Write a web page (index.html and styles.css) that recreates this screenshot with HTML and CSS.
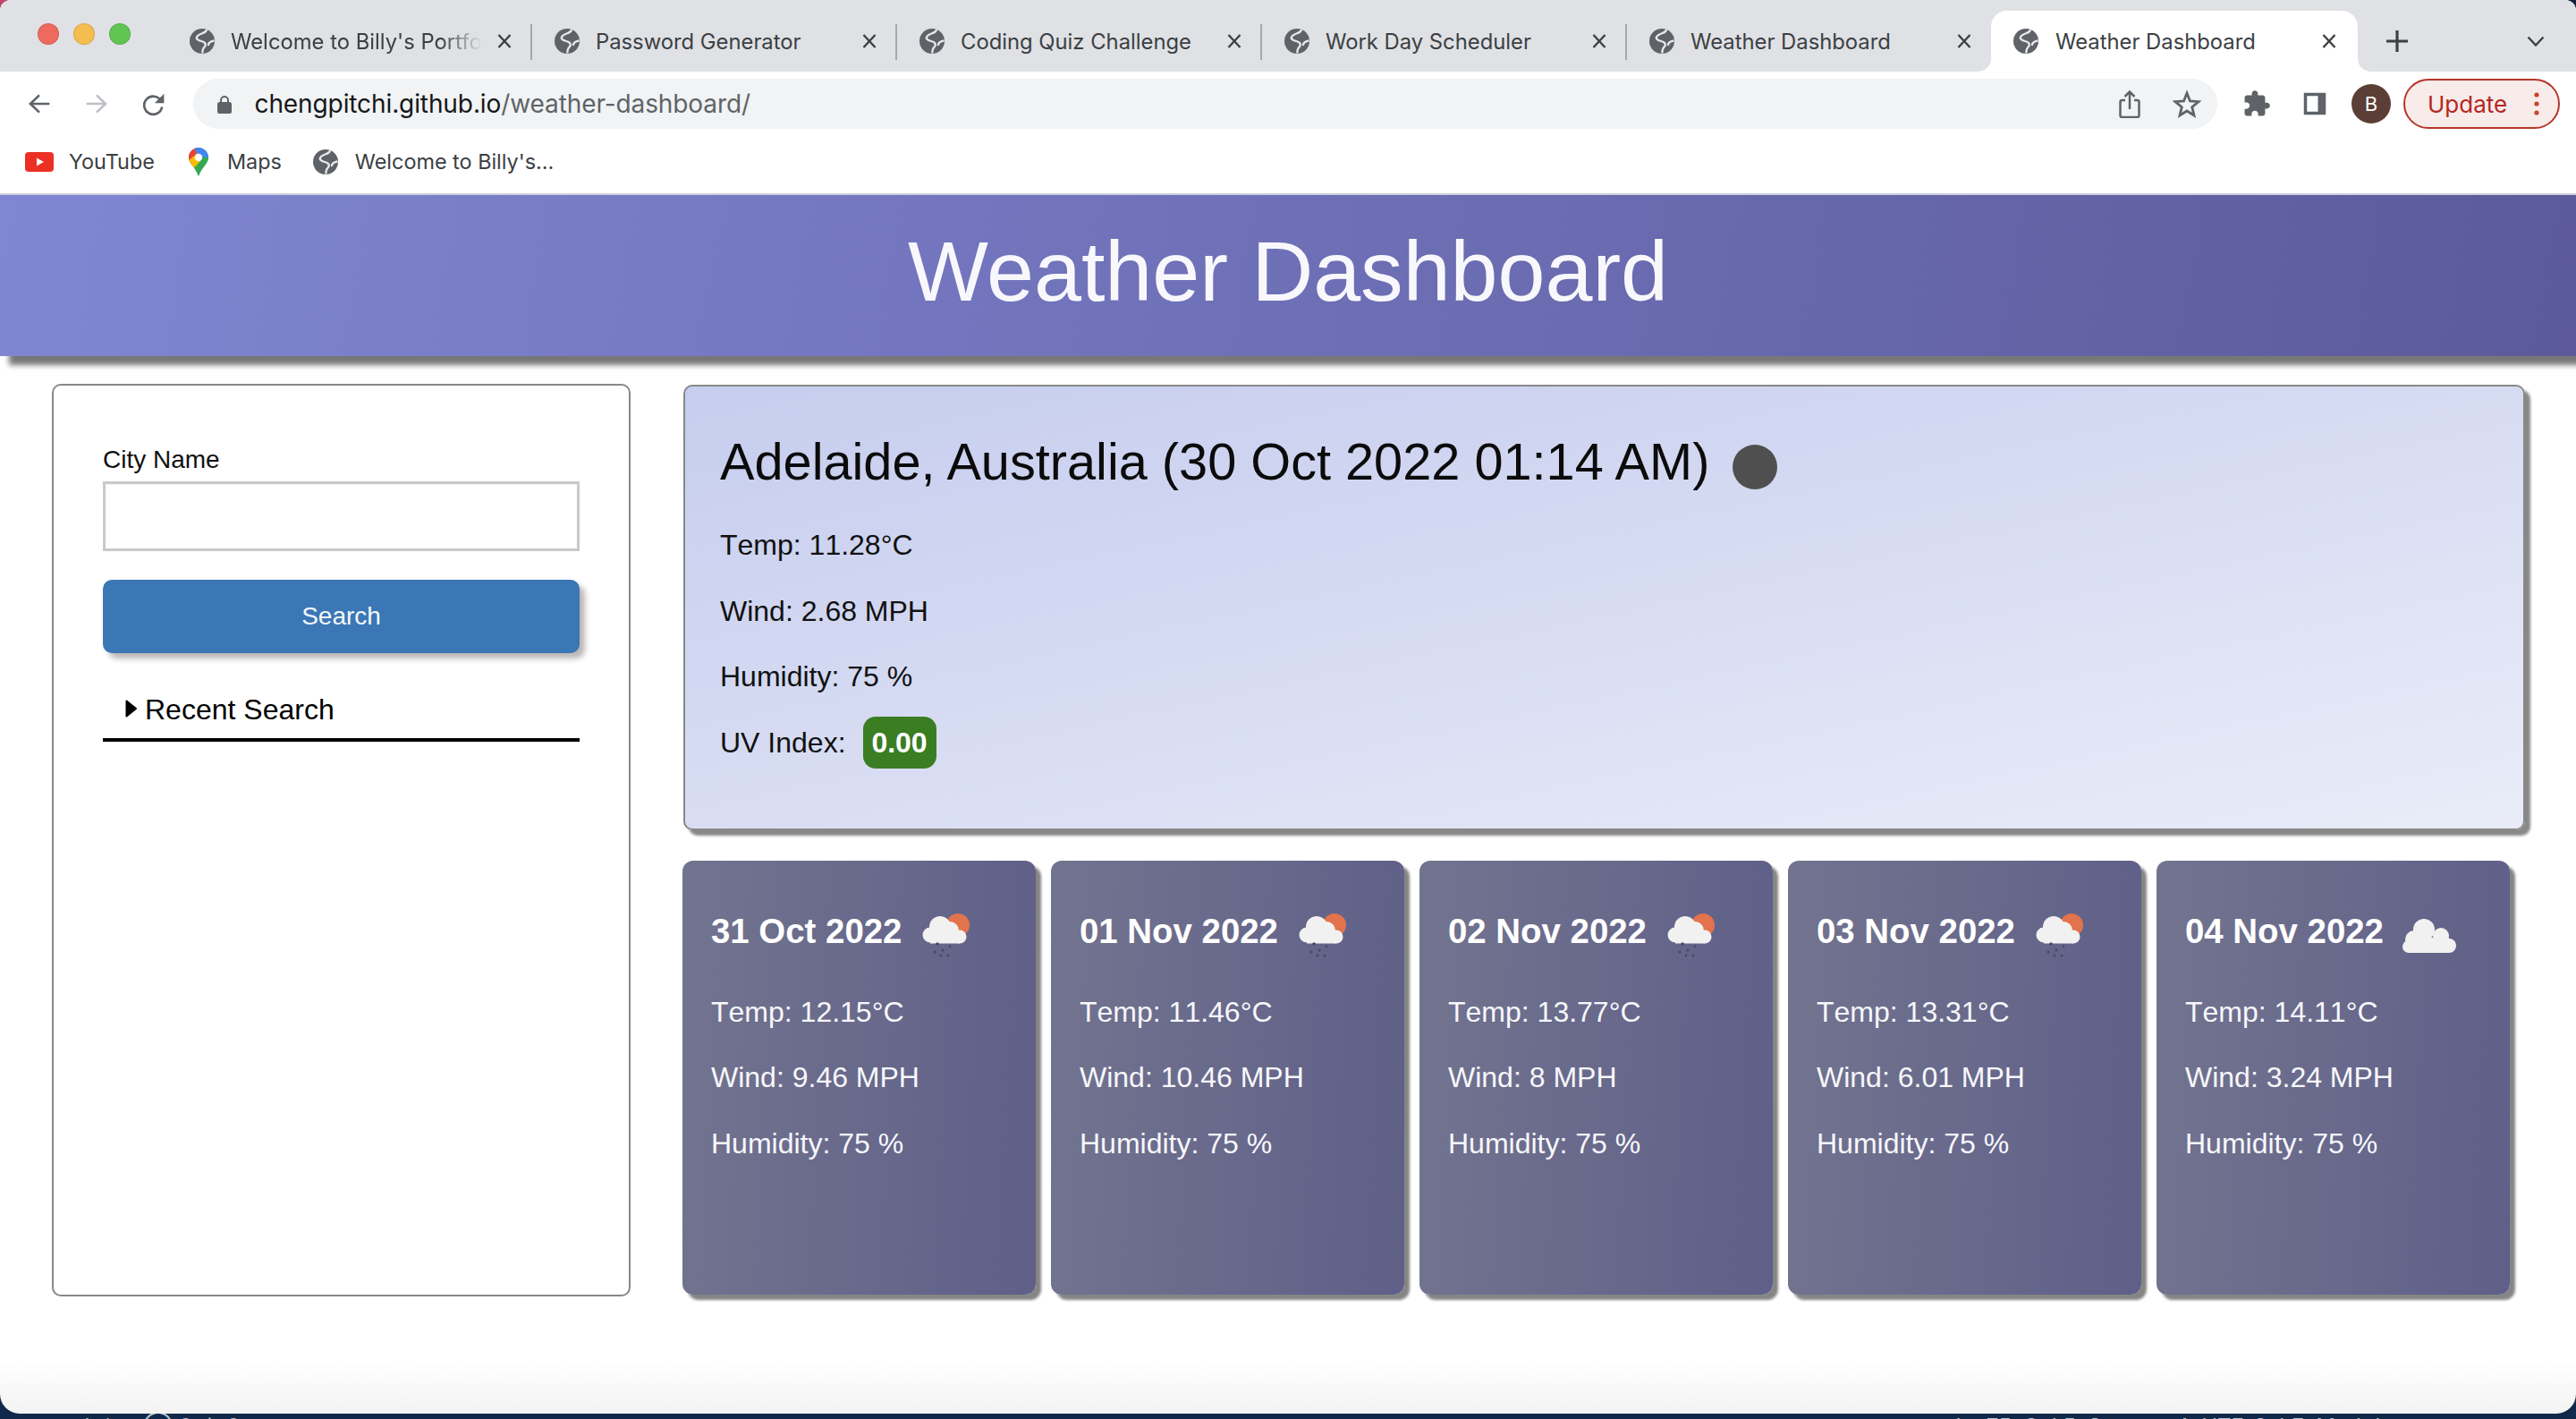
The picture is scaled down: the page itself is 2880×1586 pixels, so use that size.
FILE: index.html
```html
<!DOCTYPE html>
<html lang="en">
<head>
<meta charset="utf-8">
<title>Weather Dashboard</title>
<link rel="stylesheet" href="styles.css">
</head>
<body>
<svg class="defs" width="0" height="0" aria-hidden="true">
  <symbol id="globe" viewBox="0 0 28 28">
    <circle cx="14" cy="14" r="14" fill="#5f6368"/>
    <path d="M19 1 C18.500 5.500 12.500 4.500 9 8 C6 11 9 13 13 14 C17 15 19 17 17 20 C15 22 14 24 14.500 27.500 M21 19 C20.500 15.500 24 14 27.500 13.500" fill="none" stroke="#e8e9ec" stroke-width="2.300"/>
  </symbol>
  <symbol id="close" viewBox="0 0 16 16">
    <path d="M1.500 1 L14.500 15 M14.500 1 L1.500 15" fill="none" stroke="#3c4043" stroke-width="2.400"/>
  </symbol>
  <symbol id="rain" viewBox="0 0 80 70">
    <circle cx="52" cy="28" r="13" fill="#e2734c"/>
    <g fill="#f1f1f1">
      <circle cx="32" cy="30" r="12"/>
      <circle cx="21" cy="39" r="8.500"/>
      <circle cx="43" cy="34" r="10"/>
      <circle cx="54" cy="41" r="7.500"/>
      <rect x="21" y="36" width="33" height="12.500"/>
    </g>
    <g fill="#4a4a5c">
      <circle cx="29" cy="49" r="1.800"/><circle cx="26" cy="58" r="1.600"/><circle cx="35" cy="56" r="1.600"/>
      <circle cx="43" cy="52" r="1.400"/><circle cx="41" cy="62" r="1.600"/><circle cx="33" cy="62" r="1.400"/>
    </g>
  </symbol>
  <symbol id="cloud" viewBox="0 0 80 70">
    <g fill="#f1f1f1">
      <circle cx="34" cy="33" r="12"/>
      <circle cx="23" cy="44" r="10"/>
      <circle cx="53" cy="40" r="9"/>
      <circle cx="62" cy="51" r="8"/>
      <circle cx="17" cy="52" r="7"/>
      <rect x="17" y="42" width="45" height="17"/>
    </g>
  </symbol>
</svg>

<div class="desktop">
  <div class="window">
    <div class="tabstrip">
      <div class="lights">
        <span class="light light-red"></span>
        <span class="light light-yellow"></span>
        <span class="light light-green"></span>
      </div>
      <div class="tab">
        <svg class="tab-icon"><use href="#globe"/></svg>
        <span class="tab-title tab-title-fade">Welcome to Billy's Portfolio</span>
        <svg class="tab-close"><use href="#close"/></svg>
      </div>
      <div class="tab">
        <svg class="tab-icon"><use href="#globe"/></svg>
        <span class="tab-title">Password Generator</span>
        <svg class="tab-close"><use href="#close"/></svg>
      </div>
      <div class="tab">
        <svg class="tab-icon"><use href="#globe"/></svg>
        <span class="tab-title">Coding Quiz Challenge</span>
        <svg class="tab-close"><use href="#close"/></svg>
      </div>
      <div class="tab">
        <svg class="tab-icon"><use href="#globe"/></svg>
        <span class="tab-title">Work Day Scheduler</span>
        <svg class="tab-close"><use href="#close"/></svg>
      </div>
      <div class="tab tab-nosep">
        <svg class="tab-icon"><use href="#globe"/></svg>
        <span class="tab-title">Weather Dashboard</span>
        <svg class="tab-close"><use href="#close"/></svg>
      </div>
      <div class="tab tab-active">
        <svg class="tab-icon"><use href="#globe"/></svg>
        <span class="tab-title">Weather Dashboard</span>
        <svg class="tab-close"><use href="#close"/></svg>
      </div>
      <svg class="newtab" viewBox="0 0 24 24"><path d="M12 0 V24 M0 12 H24" fill="none" stroke="#3c4043" stroke-width="3.200"/></svg>
      <svg class="tabmenu" viewBox="0 0 20 12"><path d="M1.500 1.500 L10 10.500 L18.500 1.500" fill="none" stroke="#3c4043" stroke-width="2.400"/></svg>
    </div>

    <div class="toolbar">
      <svg class="tool" viewBox="0 0 64 64"><path d="M45 32 H21 M32 21 L20.500 32 L32 43" fill="none" stroke="#5f6368" stroke-width="3"/></svg>
      <svg class="tool" viewBox="0 0 64 64"><path d="M19 32 H43 M32 21 L43.500 32 L32 43" fill="none" stroke="#bdc1c6" stroke-width="3"/></svg>
      <svg class="tool" viewBox="0 0 64 64"><path d="M41 28 A11.500 11.500 0 1 0 42.500 36" fill="none" stroke="#5f6368" stroke-width="3"/><path d="M45 19 V31 H33 Z" fill="#5f6368"/></svg>
      <div class="omnibox">
        <svg class="lock" viewBox="0 0 16 21"><path d="M4 9 V6 a4 4 0 0 1 8 0 V9" fill="none" stroke="#5f6368" stroke-width="2"/><rect y="8" width="16" height="13" rx="2.500" fill="#5f6368"/></svg>
        <span class="url"><span class="url-host">chengpitchi.github.io</span>/weather-dashboard/</span>
        <span class="omni-spacer"></span>
        <svg class="omni-icon" viewBox="0 0 32 32"><path d="M11 12 H7.500 a2 2 0 0 0 -2 2 V29 a2 2 0 0 0 2 2 H24.500 a2 2 0 0 0 2 -2 V14 a2 2 0 0 0 -2 -2 H21 M16 22 V3 M10.500 8 L16 2.500 L21.500 8" fill="none" stroke="#5f6368" stroke-width="2.500"/></svg>
        <svg class="omni-icon" viewBox="0 0 32 32"><path d="M16 4 L19.500 13 L29 13.700 L21.700 19.700 L24 29 L16 24 L8 29 L10.300 19.700 L3 13.700 L12.500 13 Z" fill="none" stroke="#5f6368" stroke-width="2.800" stroke-linejoin="miter"/></svg>
      </div>
      <svg class="tool" viewBox="-8.800 -8.800 41.600 41.600"><path d="M20.500 11H19V7c0-1.100-.9-2-2-2h-4V3.500C13 2.120 11.880 1 10.500 1S8 2.120 8 3.500V5H4c-1.100 0-1.990.9-1.990 2v3.800H3.500c1.490 0 2.700 1.210 2.700 2.700s-1.210 2.700-2.700 2.700H2V20c0 1.100.9 2 2 2h3.800v-1.500c0-1.490 1.210-2.700 2.700-2.700 1.490 0 2.700 1.210 2.700 2.700V22H17c1.100 0 2-.9 2-2v-4h1.500c1.380 0 2.500-1.120 2.500-2.500S21.880 11 20.500 11z" fill="#5f6368"/></svg>
      <svg class="tool tool-panel" viewBox="0 0 64 64"><path fill-rule="evenodd" d="M18 18 H46 V46 H18 Z M22 22 V42 H36 V22 Z" fill="#5f6368"/></svg>
      <div class="avatar">B</div>
      <div class="update">
        <span class="update-label">Update</span>
        <svg class="update-dots" viewBox="0 0 6 26"><circle cx="3" cy="3" r="2.600"/><circle cx="3" cy="13" r="2.600"/><circle cx="3" cy="23" r="2.600"/></svg>
      </div>
    </div>

    <div class="bookmarks">
      <div class="bookmark">
        <svg class="bm-yt" viewBox="0 0 32 22"><rect width="32" height="22" rx="4" fill="#ed3024"/><path d="M13 6.500 L21 11 L13 15.500 Z" fill="#fff"/></svg>
        <span>YouTube</span>
      </div>
      <div class="bookmark bookmark-maps">
        <svg class="bm-maps" viewBox="0 0 22 32">
          <defs><clipPath id="pin"><path d="M11 0 C17 0 22 5 22 11 C22 18 14 22 11 32 C8 22 0 18 0 11 C0 5 5 0 11 0 Z"/></clipPath></defs>
          <g clip-path="url(#pin)">
            <rect width="22" height="32" fill="#34a853"/>
            <path d="M0 0 H11 V11 L0 20 Z" fill="#ea4335"/>
            <path d="M6 0 H22 V11 H11 Z" fill="#4285f4"/>
            <path d="M0 14 L10 6 L15 14 L4 24 Z" fill="#fbbc04"/>
            <path d="M22 10 V14 L11 32 L6 24 L15 12 Z" fill="#34a853"/>
          </g>
          <circle cx="11" cy="11" r="4.200" fill="#fff"/>
        </svg>
        <span>Maps</span>
      </div>
      <div class="bookmark bookmark-site">
        <svg class="bm-globe"><use href="#globe"/></svg>
        <span>Welcome to Billy's...</span>
      </div>
    </div>

    <header class="banner"><h1 class="banner-title">Weather Dashboard</h1></header>

    <main class="content">
      <aside class="sidebar">
        <label class="field-label" for="city">City Name</label>
        <input class="field-input" id="city" type="text">
        <button class="search-btn" type="button">Search</button>
        <div class="recent">
          <svg class="recent-caret" viewBox="0 0 13 20"><path d="M1.500 1.500 L12 10 L1.500 18.500 Z" fill="#000" stroke="#000" stroke-width="2" stroke-linejoin="round"/></svg>
          <span>Recent Search</span>
        </div>
      </aside>

      <section class="results">
        <div class="today">
          <div class="today-head">
            <h2 class="today-title">Adelaide, Australia (30 Oct 2022 01:14 AM)</h2>
            <span class="moon"></span>
          </div>
          <p class="stat">Temp: 11.28°C</p>
          <p class="stat">Wind: 2.68 MPH</p>
          <p class="stat">Humidity: 75 %</p>
          <div class="stat uv"><span>UV Index:</span><span class="uv-badge">0.00</span></div>
        </div>

        <div class="forecast">
          <article class="card">
            <div class="card-head"><h3 class="card-date">31 Oct 2022</h3><svg class="card-icon"><use href="#rain"/></svg></div>
            <p class="stat">Temp: 12.15°C</p>
            <p class="stat">Wind: 9.46 MPH</p>
            <p class="stat">Humidity: 75 %</p>
          </article>
          <article class="card">
            <div class="card-head"><h3 class="card-date">01 Nov 2022</h3><svg class="card-icon"><use href="#rain"/></svg></div>
            <p class="stat">Temp: 11.46°C</p>
            <p class="stat">Wind: 10.46 MPH</p>
            <p class="stat">Humidity: 75 %</p>
          </article>
          <article class="card">
            <div class="card-head"><h3 class="card-date">02 Nov 2022</h3><svg class="card-icon"><use href="#rain"/></svg></div>
            <p class="stat">Temp: 13.77°C</p>
            <p class="stat">Wind: 8 MPH</p>
            <p class="stat">Humidity: 75 %</p>
          </article>
          <article class="card">
            <div class="card-head"><h3 class="card-date">03 Nov 2022</h3><svg class="card-icon"><use href="#rain"/></svg></div>
            <p class="stat">Temp: 13.31°C</p>
            <p class="stat">Wind: 6.01 MPH</p>
            <p class="stat">Humidity: 75 %</p>
          </article>
          <article class="card">
            <div class="card-head"><h3 class="card-date">04 Nov 2022</h3><svg class="card-icon"><use href="#cloud"/></svg></div>
            <p class="stat">Temp: 14.11°C</p>
            <p class="stat">Wind: 3.24 MPH</p>
            <p class="stat">Humidity: 75 %</p>
          </article>
        </div>
      </section>
    </main>
  </div>
  <footer class="statusbar">
    <span class="status-left">main* ⟳ ⊗ 0 ⚠ 0</span>
    <span class="status-right">Ln 75, Col 5 &nbsp;Spaces: 4 &nbsp;UTF-8 &nbsp;LF &nbsp;Markdown</span>
  </footer>
</div>
</body>
</html>
```

FILE: styles.css
```css
* { box-sizing: border-box; }
html, body { margin: 0; padding: 0; }
body { width: 2880px; height: 1586px; overflow: hidden; font-family: "Liberation Sans", Arial, sans-serif; color: #111; }
.defs { position: absolute; }

.desktop {
  height: 1586px;
  display: flex;
  flex-direction: column;
  background:
    linear-gradient(90deg, #c4446a 0 50%, #16213a 50% 100%) top / 100% 30px no-repeat,
    linear-gradient(90deg, #10294a 0 50%, #10294a 50% 100%) bottom / 100% 30px no-repeat,
    #1f4a7d;
}
.window {
  height: 1580px;
  border-radius: 12px 12px 22px 22px;
  overflow: hidden;
  display: flex;
  flex-direction: column;
  background: linear-gradient(to bottom, #fff calc(100% - 60px), #f3f3f3);
}

/* tab strip */
.tabstrip {
  height: 80px;
  flex: none;
  display: flex;
  align-items: flex-end;
  background: #dfe1e5;
  font-family: Inter, "Noto Sans", sans-serif;
  padding-right: 35px;
}
.lights { width: 186px; height: 80px; flex: none; display: flex; gap: 16px; padding: 26px 0 0 42px; }
.light { width: 24px; height: 24px; border-radius: 50%; border: 1px solid rgba(0,0,0,.12); }
.light-red { background: #ee6a5f; }
.light-yellow { background: #f5bd4f; }
.light-green { background: #61c554; }

.tab {
  position: relative;
  width: 408px;
  height: 68px;
  flex: none;
  display: flex;
  align-items: center;
  padding-left: 26px;
  color: #3c4043;
  font-size: 23.800px;
}
.tab::after {
  content: "";
  position: absolute;
  right: -1px;
  top: 15px;
  width: 2px;
  height: 40px;
  background: #a4a7ab;
}
.tab-nosep::after { display: none; }
.tab-icon { width: 28px; height: 28px; flex: none; }
.tab-title { width: 280px; margin-left: 18px; flex: none; white-space: nowrap; overflow: hidden; }
.tab-title-fade { -webkit-mask-image: linear-gradient(to right, #000 84%, transparent 100%); mask-image: linear-gradient(to right, #000 84%, transparent 100%); }
.tab-close { width: 16px; height: 16px; flex: none; margin-left: 18px; }
.tab-active { width: 410px; background: #fff; border-radius: 18px 18px 0 0; padding-left: 25px; }
.tab-active .tab-title { margin-left: 19px; }
.tab-active::before, .tab-active::after {
  content: "";
  position: absolute;
  bottom: 0;
  top: auto;
  width: 14px;
  height: 14px;
  background: radial-gradient(circle at 0 0, transparent 13.500px, #fff 14px);
}
.tab-active::before { left: -14px; }
.tab-active::after { right: -14px; background: radial-gradient(circle at 100% 0, transparent 13.500px, #fff 14px); }
.newtab { width: 24px; height: 24px; flex: none; margin: 0 0 22px 32px; }
.tabmenu { width: 20px; height: 12px; flex: none; margin: 0 0 28px auto; }

/* toolbar */
.toolbar { height: 76px; flex: none; display: flex; align-items: flex-start; padding: 8px 17px 0 12px; background: #fff; font-family: Inter, "Noto Sans", sans-serif; }
.tool { width: 64px; height: 56px; flex: none; overflow: visible; }
.tool-panel { margin-left: 1px; }
.omnibox {
  width: 2263px;
  height: 56px;
  flex: none;
  margin: 0 12px;
  padding: 0 18px 0 27px;
  display: flex;
  align-items: center;
  border-radius: 28px;
  background: #f1f3f4;
}
.lock { width: 16px; height: 21px; flex: none; }
.url { margin-left: 25.500px; font-size: 28px; letter-spacing: -.1px; color: #5f6368; white-space: nowrap; }
.url-host { color: #15171a; }
.omni-spacer { flex: 1; }
.omni-icon { width: 32px; height: 32px; flex: none; margin-left: 32px; }
.avatar {
  width: 44px; height: 44px; flex: none;
  margin: 6px 0 0 9px;
  border-radius: 50%;
  background: #5b3f36;
  color: #fff;
  font-size: 22px;
  display: flex; align-items: center; justify-content: center;
}
.update {
  width: 175px; height: 56px; flex: none;
  margin-left: 14px;
  padding: 0 21px 0 25px;
  border: 2.500px solid #b5362a;
  border-radius: 28px;
  background: #f8ecea;
  display: flex; align-items: center; justify-content: space-between;
  color: #b5261e;
  font-size: 26px;
}
.update-dots { width: 6px; height: 26px; fill: #c9402f; }

/* bookmarks */
.bookmarks {
  height: 62px;
  flex: none;
  display: flex;
  align-items: center;
  padding: 0 0 11px 28px;
  background: #fff;
  border-bottom: 2px solid #cdd0dc;
  font-family: Inter, "Noto Sans", sans-serif;
  font-size: 23.400px;
  color: #3c4043;
}
.bookmark { display: flex; align-items: center; }
.bm-yt { width: 32px; height: 22px; margin-right: 17px; }
.bookmark-maps { margin-left: 38px; }
.bm-maps { width: 22px; height: 32px; margin-right: 21px; }
.bookmark-site { margin-left: 35px; }
.bm-globe { width: 28px; height: 28px; margin-right: 19px; }

/* banner */
.banner {
  height: 180px;
  flex: none;
  position: relative;
  z-index: 1;
  display: flex;
  align-items: center;
  justify-content: center;
  padding-bottom: 10px;
  background: linear-gradient(100deg, #8086d2, #5c5a9b);
  box-shadow: 10px 10px 6px #777;
}
.banner-title { margin: 0; font-size: 95.200px; font-weight: 400; line-height: 1.5; color: #f8f8fc; }

/* content */
.content { display: flex; align-items: flex-start; padding: 31px 0 0 58px; }
.sidebar {
  width: 647px;
  height: 1020px;
  flex: none;
  padding: 62px 55px 0;
  border: 2px solid #888;
  border-radius: 10px;
  background: #fff;
  display: flex;
  flex-direction: column;
}
.field-label { font-size: 28px; line-height: 42px; margin-bottom: 3px; color: #111; }
.field-input { height: 78px; width: 100%; border: 3px solid #cacaca; background: #fff; box-shadow: inset 0 1px 2px rgba(0,0,0,.06); }
.search-btn {
  height: 82px;
  margin-top: 32px;
  border: 0;
  border-radius: 10px;
  background: #3b77b5;
  color: #f4f7fb;
  font: 400 28px "Liberation Sans", Arial, sans-serif;
  box-shadow: 6px 6px 6px #bbb6b6;
}
.recent {
  margin-top: 37px;
  height: 62px;
  display: flex;
  align-items: flex-start;
  padding-left: 25px;
  border-bottom: 4px solid #000;
  font-size: 32px;
  line-height: 52px;
  color: #000;
}
.recent-caret { width: 13px; height: 20px; margin: 15px 9px 0 0; flex: none; }

.results { width: 2059px; margin-left: 59px; padding-top: 1px; display: flex; flex-direction: column; gap: 34px; }
.today {
  height: 498px;
  padding: 41px 39px 0;
  border: 2px solid #888;
  border-radius: 10px;
  background: linear-gradient(168deg, #c6cdee, #e9ecf8);
  box-shadow: 6px 6px 3px #888;
}
.today-head { display: flex; align-items: center; height: 86.400px; margin-bottom: 25.600px; }
.today-title { margin: 0; font-size: 57.700px; font-weight: 400; line-height: 86.400px; color: #0b0b0b; white-space: nowrap; }
.moon { width: 50px; height: 50px; flex: none; margin: 12px 0 0 26px; border-radius: 50%; background: #4f4f4f; }
.stat { margin: 0 0 25.600px; font-size: 32px; line-height: 48px; font-kerning: none; }
.uv { display: flex; align-items: center; gap: 20px; height: 48px; margin: 0; }
.uv-badge {
  width: 82px; height: 58px;
  flex: none;
  margin-left: -1px;
  display: flex; align-items: center; justify-content: center;
  border-radius: 14px;
  background: #3a7d23;
  color: #fff;
  font-weight: 700;
}
.forecast { display: flex; gap: 17px; margin-left: -1px; }
.card {
  width: 395px;
  height: 485px;
  flex: none;
  padding: 50px 0 0 32px;
  border-radius: 12px;
  color: #f7f7fb;
  background: linear-gradient(93deg, #72748f, #5f5f88);
  box-shadow: 6px 6px 3px #858585;
}
.card-head { display: flex; align-items: center; height: 57.600px; margin-bottom: 37px; }
.card-date { margin: 0; font-size: 38.400px; font-weight: 700; line-height: 57.600px; color: #fff; white-space: nowrap; }
.card-icon { width: 80px; height: 70px; flex: none; margin-left: 11px; }

/* status bar peeking below the window */
.statusbar {
  height: 6px;
  flex: none;
  overflow: hidden;
  display: flex;
  justify-content: space-between;
  padding: 0 171px 0 60px;
  background: transparent;
  font-family: Inter, "Noto Sans", sans-serif;
  font-size: 24px;
  line-height: 30px;
  color: #b8c4d4;
  white-space: nowrap;
}
```
